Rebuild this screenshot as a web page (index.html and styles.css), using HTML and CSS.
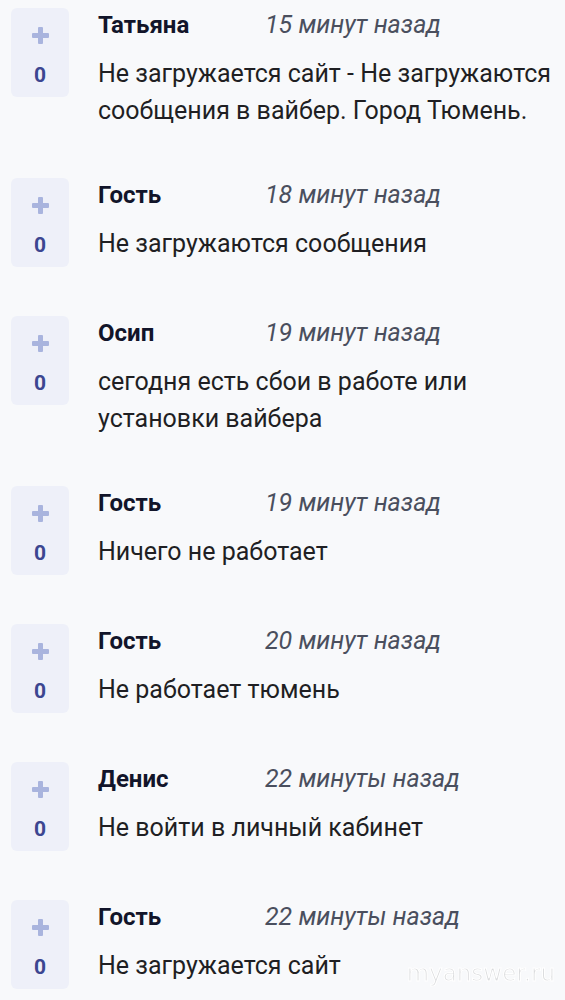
FILE: index.html
```html
<!DOCTYPE html>
<html lang="ru">
<head>
    <meta charset="UTF-8">
    <meta name="viewport" content="width=device-width, initial-scale=1.0">
    <title>Комментарии</title>
    <link rel="stylesheet" href="styles.css">
</head>
<body>
    <div class="comments">
        <div class="comment">
            <div class="vote">
                <svg class="vote-plus" viewBox="0 0 17 17"><rect x="6" y="0" width="5" height="17" rx="1"/><rect x="0" y="6" width="17" height="5" rx="1"/></svg>
                <span class="vote-count">0</span>
            </div>
            <div class="comment-body">
                <div class="comment-head">
                    <span class="author">Татьяна</span>
                    <span class="time">15 минут назад</span>
                </div>
                <p class="text">Не загружается сайт - Не загружаются сообщения в вайбер. Город Тюмень.</p>
            </div>
        </div>

        <div class="comment">
            <div class="vote">
                <svg class="vote-plus" viewBox="0 0 17 17"><rect x="6" y="0" width="5" height="17" rx="1"/><rect x="0" y="6" width="17" height="5" rx="1"/></svg>
                <span class="vote-count">0</span>
            </div>
            <div class="comment-body">
                <div class="comment-head">
                    <span class="author">Гость</span>
                    <span class="time">18 минут назад</span>
                </div>
                <p class="text">Не загружаются сообщения</p>
            </div>
        </div>

        <div class="comment">
            <div class="vote">
                <svg class="vote-plus" viewBox="0 0 17 17"><rect x="6" y="0" width="5" height="17" rx="1"/><rect x="0" y="6" width="17" height="5" rx="1"/></svg>
                <span class="vote-count">0</span>
            </div>
            <div class="comment-body">
                <div class="comment-head">
                    <span class="author">Осип</span>
                    <span class="time">19 минут назад</span>
                </div>
                <p class="text">сегодня есть сбои в работе или установки вайбера</p>
            </div>
        </div>

        <div class="comment">
            <div class="vote">
                <svg class="vote-plus" viewBox="0 0 17 17"><rect x="6" y="0" width="5" height="17" rx="1"/><rect x="0" y="6" width="17" height="5" rx="1"/></svg>
                <span class="vote-count">0</span>
            </div>
            <div class="comment-body">
                <div class="comment-head">
                    <span class="author">Гость</span>
                    <span class="time">19 минут назад</span>
                </div>
                <p class="text">Ничего не работает</p>
            </div>
        </div>

        <div class="comment">
            <div class="vote">
                <svg class="vote-plus" viewBox="0 0 17 17"><rect x="6" y="0" width="5" height="17" rx="1"/><rect x="0" y="6" width="17" height="5" rx="1"/></svg>
                <span class="vote-count">0</span>
            </div>
            <div class="comment-body">
                <div class="comment-head">
                    <span class="author">Гость</span>
                    <span class="time">20 минут назад</span>
                </div>
                <p class="text">Не работает тюмень</p>
            </div>
        </div>

        <div class="comment">
            <div class="vote">
                <svg class="vote-plus" viewBox="0 0 17 17"><rect x="6" y="0" width="5" height="17" rx="1"/><rect x="0" y="6" width="17" height="5" rx="1"/></svg>
                <span class="vote-count">0</span>
            </div>
            <div class="comment-body">
                <div class="comment-head">
                    <span class="author">Денис</span>
                    <span class="time">22 минуты назад</span>
                </div>
                <p class="text">Не войти в личный кабинет</p>
            </div>
        </div>

        <div class="comment">
            <div class="vote">
                <svg class="vote-plus" viewBox="0 0 17 17"><rect x="6" y="0" width="5" height="17" rx="1"/><rect x="0" y="6" width="17" height="5" rx="1"/></svg>
                <span class="vote-count">0</span>
            </div>
            <div class="comment-body">
                <div class="comment-head">
                    <span class="author">Гость</span>
                    <span class="time">22 минуты назад</span>
                </div>
                <p class="text">Не загружается сайт</p>
            </div>
        </div>
    </div>

    <div class="watermark">myanswer.ru</div>
</body>
</html>
```

FILE: styles.css
```css
/* General Styles */
body {
    font-family: Roboto, 'Noto Sans', sans-serif;
    background: #f8f9fb;
    margin: 0;
    padding: 0;
    color: #1f1f23;
}

.comments {
    padding: 8px 0 0 11px;
}

.comment {
    display: flex;
    align-items: flex-start;
    margin-bottom: 49px;
}

/* Vote box */
.vote {
    flex: none;
    width: 58px;
    height: 89px;
    background: #eef0f9;
    border-radius: 6px;
    display: flex;
    flex-direction: column;
    align-items: center;
}

.vote-plus {
    width: 17px;
    height: 17px;
    margin-top: 19px;
    fill: #a9b4de;
}

.vote-count {
    margin-top: 19px;
    font-size: 21px;
    font-weight: 700;
    line-height: 24px;
    color: #3c4691;
}

/* Comment content */
.comment-body {
    margin-left: 29px;
    flex: 1;
}

.comment-head {
    display: flex;
    align-items: baseline;
    height: 34px;
    line-height: 34px;
}

.author {
    width: 167px;
    font-size: 24px;
    font-weight: 700;
    color: #12152a;
}

.time {
    font-size: 25px;
    font-style: italic;
    color: #4a4f5e;
}

.text {
    margin: 13px 0 0;
    font-size: 25px;
    line-height: 37px;
    padding-right: 4px;
}

/* Watermark over the bottom corner */
.watermark {
    position: fixed;
    right: 10px;
    bottom: 14px;
    font-family: 'DejaVu Sans', sans-serif;
    font-size: 23px;
    color: transparent;
    -webkit-text-stroke: 1px #ffffff;
    text-shadow: 0 0 1px rgba(0, 0, 0, 0.12);
}
```
